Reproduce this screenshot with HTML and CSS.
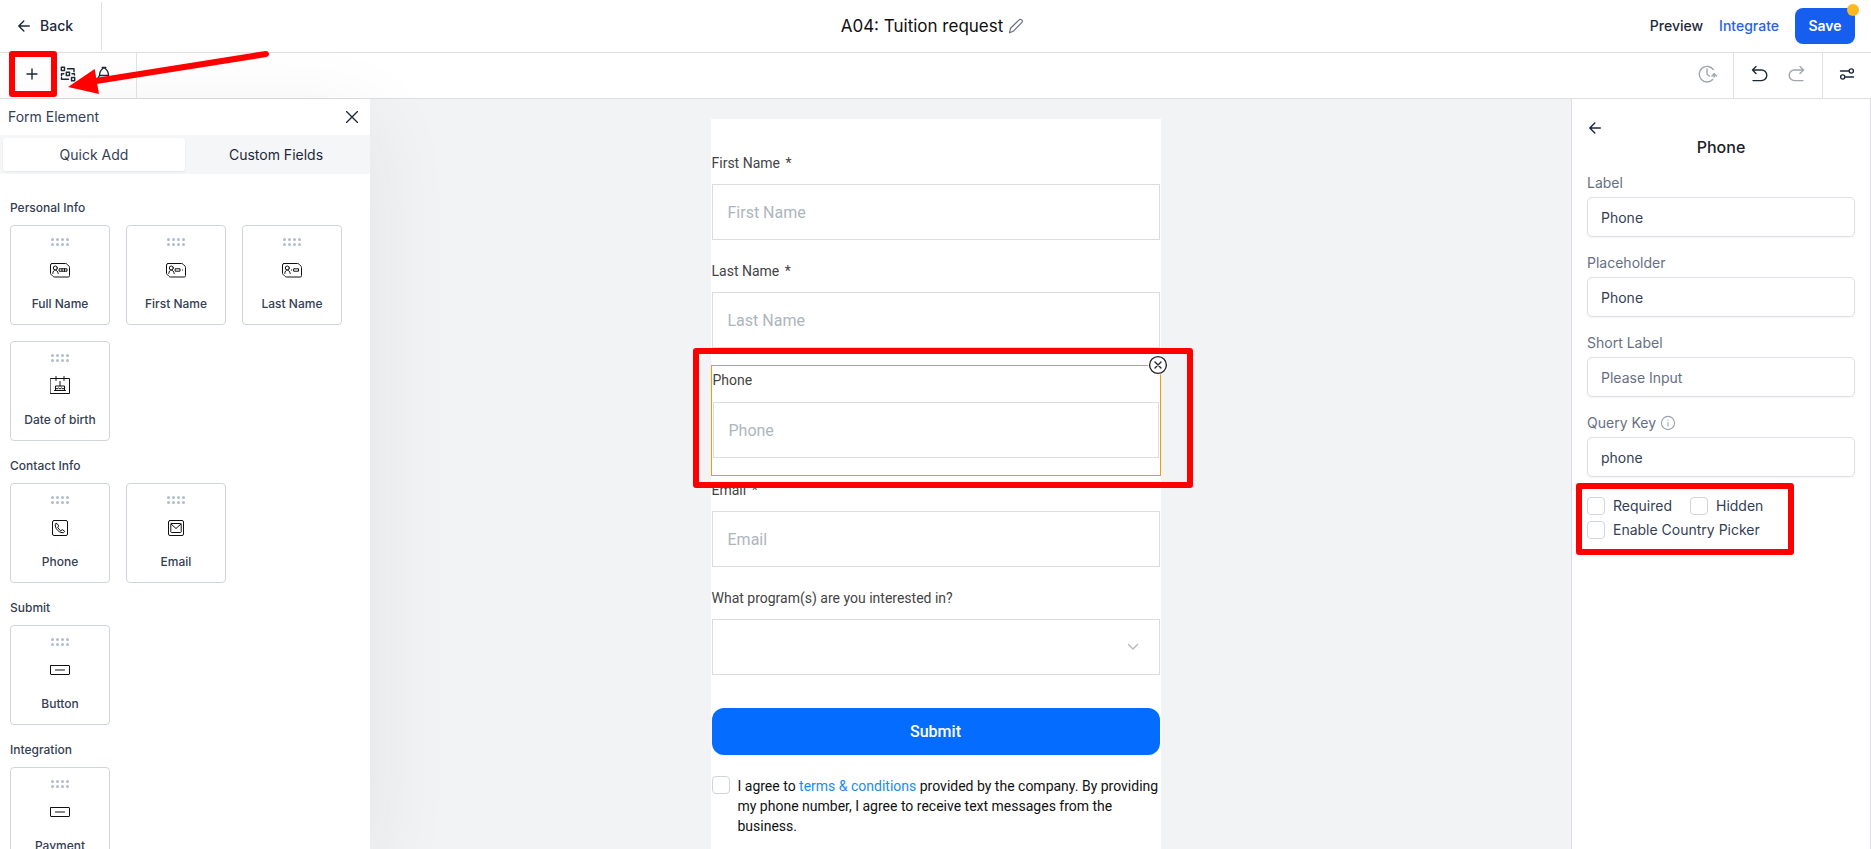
FILE: index.html
```html
<!DOCTYPE html>
<html lang="en">
<head>
<meta charset="utf-8">
<title>A04: Tuition request</title>
<link rel="stylesheet" href="styles.css">
</head>
<body>
<svg class="sprite" aria-hidden="true">
  <symbol id="arrow-left" viewBox="0 0 12 12"><path d="M11.3 6H.9M5.8 1 .8 6l5 5"/></symbol>
  <symbol id="grip" viewBox="0 0 20 10"><g fill="currentColor" stroke="none"><circle cx="2.5" cy="2.5" r="1.5"/><circle cx="7.5" cy="2.5" r="1.5"/><circle cx="12.5" cy="2.5" r="1.5"/><circle cx="17.5" cy="2.5" r="1.5"/><circle cx="2.5" cy="7.5" r="1.5"/><circle cx="7.5" cy="7.5" r="1.5"/><circle cx="12.5" cy="7.5" r="1.5"/><circle cx="17.5" cy="7.5" r="1.5"/></g></symbol>
  <symbol id="id-card" viewBox="0 0 20 20"><path d="M2 3.500h13.500q1 0 1.500.700l2 2q.5.500.5 1.300v8q0 1.500-1 1.500H4.500q-1 0-1.500-.700l-2-2q-.5-.600-.5-1.300V5q0-1.500 1.500-1.500zM2.800 13.500c.2-2.300 1-3.300 2.400-3.500 1.500.2 2.500 1.200 3 3.500"/><circle cx="5.300" cy="8" r="2"/></symbol>
  <symbol id="button-box" viewBox="0 0 20 20"><rect x=".5" y="5.500" width="19" height="9" rx=".5"/><path d="M5.500 10h9"/></symbol>
</svg>
<div class="app">
  <header class="topbar">
    <div class="topbar-left">
      <button class="back" type="button"><svg class="i12"><use href="#arrow-left"/></svg>Back</button>
    </div>
    <div class="topbar-title">
      <h1>A04: Tuition request</h1>
      <button class="bare" type="button" aria-label="Rename"><svg class="i16 slate" viewBox="0 0 16 16"><path d="M1.500 14.800l.9-4.300 8.600-8.600q1.400-1.200 2.700 0t0 2.700L5.200 13.300z"/></svg></button>
    </div>
    <nav class="topbar-right">
      <a class="preview" href="#preview">Preview</a>
      <a class="integrate" href="#integrate">Integrate</a>
      <button class="save" type="button">Save<span class="dot"></span></button>
    </nav>
  </header>

  <div class="toolbar">
    <div class="tools">
      <button class="tool" type="button" aria-label="Add element"><svg class="i12" viewBox="0 0 12 12"><path d="M6 1v10M1 6h10"/></svg><span class="mark"></span></button>
      <button class="tool" type="button" aria-label="Logic"><svg class="i16" viewBox="0 0 16 16"><path d="M1.300 1.300h3.200v3.200H1.300zM6.300 6.300h3.200v3.200H6.300zM11.500 11.500h3.200v3.200h-3.200zM7.500 2.800H14v3M12 7.800h2.500V9M3.800 7.800H1.500v2M1.500 11.500v1.800H8.500"/></svg></button>
      <button class="tool" type="button" aria-label="Style"><svg class="i16" viewBox="0 0 16 16"><path d="M6.200 1.500h3.600M8 1.500C4 4 3.500 6.500 3.500 9.500h9C12.500 6.500 12 4 8 1.500M3.500 9.500 1.800 12.500h12.400l-1.700-3"/></svg></button>
      <svg class="arrow" viewBox="0 0 202 46" aria-hidden="true"><path class="shaft" d="M198 6 28 33"/><path class="head" d="M0 39 26.700 21l4.300 25z"/></svg>
    </div>
    <div class="history">
      <button class="bare" type="button" aria-label="Versions"><svg class="i20 muted" viewBox="0 0 20 20"><path d="M15.700 15.600A7.800 7.800 0 1 1 16.400 5.600M17.200 9.500V13M15 12l2.200-2.200 2.200 2.200M10 5v5.200l2.500 1.800"/></svg></button>
    </div>
    <div class="undo">
      <button class="bare" type="button" aria-label="Undo"><svg class="i20" viewBox="0 0 20 20"><path d="M6 2.500 2.500 6 6 9.500M2.500 6h9a5.300 5.300 0 0 1 0 10.600H3"/></svg></button>
      <button class="bare" type="button" aria-label="Redo"><svg class="i20 muted" viewBox="0 0 20 20"><path d="m14 2.500 3.500 3.500L14 9.500M17.500 6h-9a5.300 5.300 0 0 0 0 10.600H17"/></svg></button>
    </div>
    <div class="settings">
      <button class="bare" type="button" aria-label="Settings"><svg class="i16" viewBox="0 0 16 16"><path d="M1.500 5H10M6 11h8.500"/><circle cx="12.300" cy="5" r="2.100"/><circle cx="3.700" cy="11" r="2.100"/></svg></button>
    </div>
  </div>

  <div class="workspace">
    <main class="canvas">
      <form class="form">
        <div class="field"><label for="first">First Name <span class="req">*</span></label><input id="first" type="text" placeholder="First Name"></div>
        <div class="field"><label for="last">Last Name <span class="req">*</span></label><input id="last" type="text" placeholder="Last Name"></div>
        <div class="field selected"><label for="phone">Phone</label><input id="phone" type="tel" placeholder="Phone">
          <button class="remove" type="button" aria-label="Remove field"><svg class="i20" viewBox="0 0 20 20"><circle cx="10" cy="10" r="8.400"/><path d="m7 7 6 6m0-6-6 6"/></svg></button>
          <span class="mark"></span>
        </div>
        <div class="field"><label for="email">Email <span class="req">*</span></label><input id="email" type="email" placeholder="Email"></div>
        <div class="field"><label for="program">What program(s) are you interested in?</label>
          <div class="select-wrap"><select id="program"><option></option></select><svg class="chevron" viewBox="0 0 12 8"><path d="m1.500 1.500 4.500 4.500 4.500-4.500"/></svg></div>
        </div>
        <button class="submit" type="button">Submit</button>
        <div class="consent"><input class="box" id="agree" type="checkbox"><label for="agree">I agree to <a href="#terms">terms &amp; conditions</a> provided by the company. By providing my phone number, I agree to receive text messages from the business.</label></div>
      </form>
    </main>

    <aside class="elements">
      <div class="elements-head"><h2>Form Element</h2><button class="bare" type="button" aria-label="Close"><svg class="i12" viewBox="0 0 12 12"><path d="m.5.5 11 11m0-11-11 11"/></svg></button></div>
      <div class="tabs"><button class="tab active" type="button">Quick Add</button><button class="tab" type="button">Custom Fields</button></div>
      <div class="groups">
        <section class="group"><h3>Personal Info</h3>
          <div class="cards">
            <button class="card" type="button"><svg class="grip"><use href="#grip"/></svg><svg class="glyph" viewBox="0 0 20 20"><use href="#id-card"/><path d="M9.500 8.800h7.500v2.400H9.500zM12 8.800v2.400M14.500 8.800v2.400"/></svg>Full Name</button>
            <button class="card" type="button"><svg class="grip"><use href="#grip"/></svg><svg class="glyph" viewBox="0 0 20 20"><use href="#id-card"/><path d="M9.500 8.800H14v2.400H9.500zM16.500 10h.2"/></svg>First Name</button>
            <button class="card" type="button"><svg class="grip"><use href="#grip"/></svg><svg class="glyph" viewBox="0 0 20 20"><use href="#id-card"/><path d="M12 8.800h4.500v2.400H12zM9.500 10h.2"/></svg>Last Name</button>
            <button class="card" type="button"><svg class="grip"><use href="#grip"/></svg><svg class="glyph" viewBox="0 0 20 20"><path d="M.5 2.500h19v15H.5zM6 .5v4M14 .5v4M4.500 14.500h11M5.500 14.500V10h9v4.500M5.500 12l1.500 1 1.500-1 1.500 1 1.500-1 1.500 1 1.500-1M10 5.500V10"/></svg>Date of birth</button>
          </div></section>
        <section class="group"><h3>Contact Info</h3>
          <div class="cards">
            <button class="card" type="button"><svg class="grip"><use href="#grip"/></svg><svg class="glyph" viewBox="0 0 20 20"><rect x="2.500" y="2.500" width="15" height="15" rx="1.500"/><path d="M6 5.500q-1 .6-.7 2.500c.8 3.500 3.200 6 6.700 6.700q2 .2 2.500-1 .3-1-2.200-2l-1.500 1Q9 11.800 7.700 9.300l1-1.500Q7.500 5 6 5.500z"/></svg>Phone</button>
            <button class="card" type="button"><svg class="grip"><use href="#grip"/></svg><svg class="glyph" viewBox="0 0 20 20"><rect x="2.500" y="2.500" width="15" height="15" rx="1.500"/><rect x="4.800" y="5.500" width="10.400" height="9" rx=".8"/><path d="m5 6 5 4.500 5-4.500"/></svg>Email</button>
          </div></section>
        <section class="group"><h3>Submit</h3>
          <div class="cards"><button class="card" type="button"><svg class="grip"><use href="#grip"/></svg><svg class="glyph"><use href="#button-box"/></svg>Button</button></div></section>
        <section class="group"><h3>Integration</h3>
          <div class="cards"><button class="card" type="button"><svg class="grip"><use href="#grip"/></svg><svg class="glyph"><use href="#button-box"/></svg>Payment</button></div></section>
      </div>
    </aside>

    <aside class="props">
      <button class="bare props-back" type="button" aria-label="Back to form"><svg class="i12"><use href="#arrow-left"/></svg></button>
      <h2>Phone</h2>
      <div class="prop"><label for="p-label">Label</label><input id="p-label" type="text" value="Phone"></div>
      <div class="prop"><label for="p-placeholder">Placeholder</label><input id="p-placeholder" type="text" value="Phone"></div>
      <div class="prop"><label for="p-short">Short Label</label><input id="p-short" type="text" placeholder="Please Input"></div>
      <div class="prop"><label for="p-key">Query Key <svg class="i16 info" viewBox="0 0 16 16"><circle cx="8" cy="8" r="6.600"/><path d="M8 7.500v3.500M8 5v.2"/></svg></label><input id="p-key" type="text" value="phone"></div>
      <div class="checks">
        <label><input class="box" type="checkbox">Required</label>
        <label><input class="box" type="checkbox">Hidden</label>
        <label><input class="box" type="checkbox">Enable Country Picker</label>
        <span class="mark"></span>
      </div>
    </aside>
  </div>
</div>
</body>
</html>
```
FILE: styles.css
```css
* { box-sizing: border-box; }
body { margin: 0; font-family: Inter, "Liberation Sans", sans-serif; font-size: 14px; line-height: 20px; color: #1d2939; background: #fff; }
button, input, select { font: inherit; color: inherit; margin: 0; }
button { background: none; border: 0; padding: 0; }
a { text-decoration: none; color: inherit; }
h1, h2, h3 { margin: 0; font-weight: 400; }
svg { display: block; flex: none; fill: none; stroke: currentColor; stroke-width: 1.4; stroke-linecap: round; stroke-linejoin: round; }
.sprite { position: absolute; width: 0; height: 0; }
.i12 { width: 12px; height: 12px; }
.i16 { width: 16px; height: 16px; }
.i20 { width: 20px; height: 20px; }
.slate { color: #667085; stroke-width: 1.2; }
.muted { color: #a0a4ac; }
.bare { display: flex; }

.app { display: flex; flex-direction: column; height: 100vh; overflow: hidden; }

.topbar { display: grid; grid-template-columns: 1fr auto 1fr; align-items: center; height: 53px; padding-right: 6px; border-bottom: 1px solid #e0e0e2; }
.topbar-left { display: flex; }
.back { display: flex; align-items: center; gap: 10px; height: 48px; width: 102px; padding-left: 18px; border-right: 1px solid #dfe0e4; font-weight: 500; }
.topbar-title { display: flex; align-items: center; gap: 5px; }
.topbar-title h1 { font-size: 17px; line-height: 24px; color: #101010; }
.topbar-right { display: flex; justify-content: flex-end; align-items: center; gap: 16px; padding-right: 10px; font-weight: 500; }
.integrate { color: #2563eb; }
.save { position: relative; width: 60px; height: 36px; border-radius: 8px; background: #155eef; color: #fff; font-weight: 600; }
.dot { position: absolute; top: -4px; right: -4px; width: 12px; height: 12px; border-radius: 50%; background: #fdb71f; }

.toolbar { display: flex; height: 46px; border-bottom: 1px solid #dddee2; }
.toolbar > div { padding-bottom: 3px; }
.tools { position: relative; z-index: 3; display: flex; align-items: center; gap: 4px; width: 137px; padding-left: 16px; border-right: 1px solid #dfe0e4; }
.tool { position: relative; display: flex; align-items: center; justify-content: center; width: 32px; height: 32px; }
.mark { position: absolute; z-index: 3; border: 6px solid #f00; border-radius: 3px; pointer-events: none; }
.tool .mark { inset: -7px -9px -7px -7px; }
.arrow { position: absolute; left: 68px; top: -5px; width: 202px; height: 46px; }
.shaft { stroke: #f00; stroke-width: 6; }
.head { fill: #f00; stroke: none; }
.history, .undo, .settings { display: flex; align-items: center; }
.toolbar .history { margin-left: auto; padding-right: 16px; }
.undo { gap: 16px; padding: 0 16px; border-left: 1px solid #dfe0e4; }
.settings { padding: 0 16px; border-left: 1px solid #dfe0e4; }

.workspace { flex: 1; min-height: 0; display: grid; grid-template-columns: 370px 1fr 300px; grid-template-rows: minmax(0, 1fr); }
.canvas { grid-area: 1 / 1 / 2 / 4; display: flex; justify-content: center; align-items: flex-start; overflow: hidden; padding-top: 20px; background: #f2f3f5; }
.form { width: 450px; min-height: 100%; padding-top: 30px; background: #fff; font-family: Roboto, "Liberation Sans", sans-serif; color: #444; }
.field { position: relative; padding-bottom: 17px; }
.field > label { display: block; line-height: 28px; margin-bottom: 7px; padding-left: 1px; }
.req { margin-left: 2px; }
.field > input, .select-wrap { display: block; width: auto; margin: 0 1px; }
.field > input { width: calc(100% - 2px); }
.field > input, .field select { height: 56px; padding: 0 15px; border: 1px solid #dcdcdd; border-radius: 0; background: #fff; font-size: 16px; outline: 0; }
.field > input::placeholder { color: #adb6bc; opacity: 1; }
.selected { border: 1px solid #f79a09; }
.selected > label { margin-bottom: 8px; }
.selected .mark { inset: -18px -33px -13px -19px; }
.remove { position: absolute; z-index: 2; top: -11px; right: -8px; border-radius: 50%; background: #fff; color: #23282d; }
.select-wrap { position: relative; }
.field select { width: 100%; appearance: none; display: block; }
.chevron { position: absolute; right: 21px; top: 24px; width: 12px; height: 8px; color: #b5b8bc; }
.submit { display: block; width: calc(100% - 2px); height: 47px; margin: 16px 1px 21px; border-radius: 12px; background: #046dff; color: #fff; font-size: 16px; font-weight: 500; }
.consent { display: flex; gap: 8px; padding: 0 1px 16px; color: #111; }
.consent a { color: #188bf6; }
.box { appearance: none; flex: none; width: 18px; height: 18px; border: 1px solid #d0d5dd; border-radius: 4px; background: #fff; }

.elements { grid-area: 1 / 1 / 2 / 2; z-index: 1; display: flex; flex-direction: column; min-height: 0; background: #fff; box-shadow: 0 20px 80px rgba(30, 32, 36, .08); }
.elements-head { display: flex; justify-content: space-between; align-items: center; height: 36px; padding: 0 12px 0 8px; color: #344054; }
.elements-head h2 { font-size: 14px; line-height: 20px; }
.elements-head svg { color: #1d2939; }
.tabs { display: flex; height: 39px; padding: 3px; background: #f5f6f8; }
.tab { flex: 1; border-radius: 3px; color: #1d2939; }
.tab.active { background: #fff; color: #344054; box-shadow: 0 1px 2px rgba(16, 24, 40, .08); }
.groups { display: flex; flex-direction: column; gap: 15px; flex: 1; min-height: 0; overflow: hidden; padding: 24px 10px 0; color: #344054; font-size: 12px; font-weight: 500; }
.group { flex: none; }
.group h3 { margin-bottom: 7px; font-size: 12px; line-height: 20px; font-weight: 500; }
.cards { display: flex; flex-wrap: wrap; gap: 16px; }
.card { display: flex; flex-direction: column; align-items: center; width: 100px; height: 100px; padding-top: 11px; border: 1px solid #d0d5dd; border-radius: 4px; background: #fff; }
.grip { width: 20px; height: 10px; margin-bottom: 13px; color: #b2bccd; }
.glyph { width: 20px; height: 20px; margin-bottom: 14px; color: #111; stroke-width: 1; }

.props { grid-area: 1 / 3 / 2 / 4; z-index: 1; padding: 23px 15px; border: solid #dddee4; border-width: 0 1px; background: #fff; }
.props-back { padding: 0 2px; height: 12px; }
.props h2 { font-size: 16px; line-height: 24px; margin: 1px 0 14px; text-align: center; font-weight: 500; color: #1d2127; }
.prop { margin-bottom: 16px; }
.prop label { display: flex; align-items: center; gap: 4px; margin-bottom: 4px; color: #667085; }
.prop input { display: block; width: 100%; height: 40px; padding: 0 13px; border: 1px solid #dddee6; border-radius: 5px; color: #344054; background: #fff; box-shadow: 0 1px 2px rgba(16, 24, 40, .05); outline: 0; }
.prop input::placeholder { color: #667085; opacity: 1; }
.info { color: #98a2b3; stroke-width: 1.1; }
.checks { position: relative; display: flex; flex-wrap: wrap; column-gap: 18px; row-gap: 4px; margin-top: 19px; color: #344054; }
.checks label { display: flex; align-items: center; gap: 8px; }
.checks .mark { inset: -13px 61px -15px -11px; }
```
